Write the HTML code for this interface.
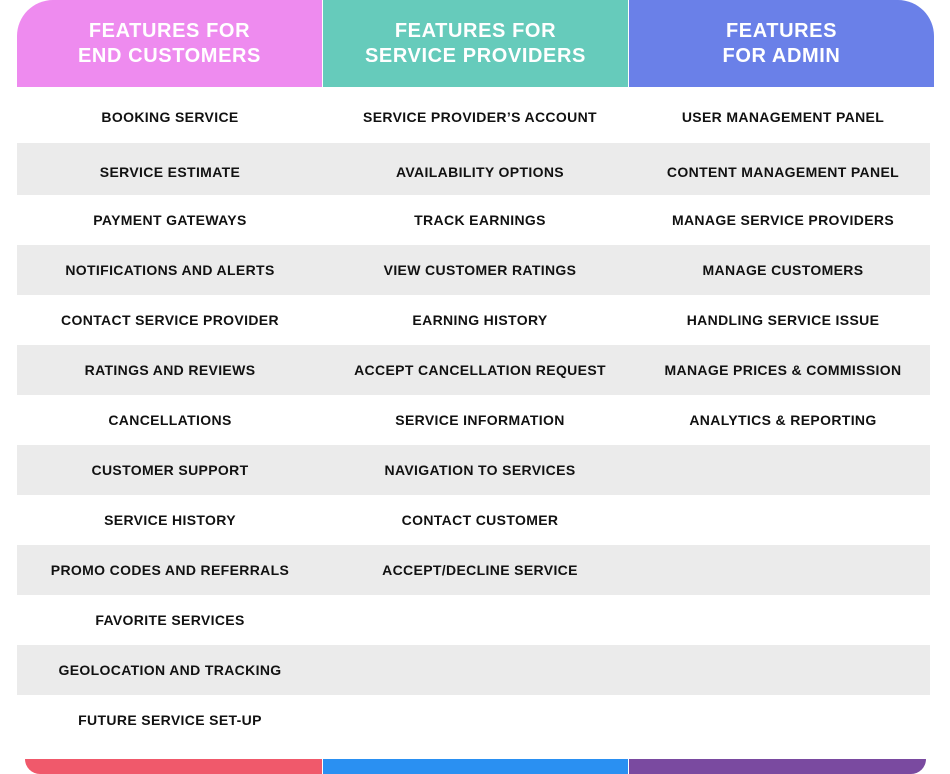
<!DOCTYPE html>
<html><head><style>
body{margin:0;width:950px;height:774px;background:#fff;position:relative;overflow:hidden;font-family:"Liberation Sans",Arial,sans-serif}
.h{position:absolute;top:0;height:87px;color:#fff;font-weight:bold;font-size:20px;letter-spacing:0.6px;text-align:center;line-height:25px;display:flex;align-items:center;justify-content:center}
.band{position:absolute;left:17px;width:913px;background:#ebebeb}
.t{position:absolute;width:306px;text-align:center;font-weight:bold;font-size:14px;letter-spacing:0.35px;color:#111;transform:translateY(-50%)}
.b{position:absolute;top:759px;height:15px}
</style></head><body>
<div class="h" style="left:17px;width:305px;background:#ee8bef;border-top-left-radius:36px">FEATURES FOR<br>END CUSTOMERS</div>
<div class="h" style="left:323px;width:305px;background:#66cbbb">FEATURES FOR<br>SERVICE PROVIDERS</div>
<div class="h" style="left:629px;width:305px;background:#6a80e8;border-top-right-radius:36px">FEATURES<br>FOR ADMIN</div>
<div class="band" style="top:143px;height:52px"></div>
<div class="band" style="top:245px;height:50px"></div>
<div class="band" style="top:345px;height:50px"></div>
<div class="band" style="top:445px;height:50px"></div>
<div class="band" style="top:545px;height:50px"></div>
<div class="band" style="top:645px;height:50px"></div>
<div class="b" style="left:25px;width:297px;background:#f0596b;border-bottom-left-radius:18px"></div>
<div class="b" style="left:323px;width:305px;background:#2a90f2"></div>
<div class="b" style="left:629px;width:297px;background:#7a4aa0;border-bottom-right-radius:18px"></div>
<div class="t" style="left:17px;top:117px">BOOKING SERVICE</div>
<div class="t" style="left:17px;top:172px">SERVICE ESTIMATE</div>
<div class="t" style="left:17px;top:220px">PAYMENT GATEWAYS</div>
<div class="t" style="left:17px;top:270px">NOTIFICATIONS AND ALERTS</div>
<div class="t" style="left:17px;top:320px">CONTACT SERVICE PROVIDER</div>
<div class="t" style="left:17px;top:370px">RATINGS AND REVIEWS</div>
<div class="t" style="left:17px;top:420px">CANCELLATIONS</div>
<div class="t" style="left:17px;top:470px">CUSTOMER SUPPORT</div>
<div class="t" style="left:17px;top:520px">SERVICE HISTORY</div>
<div class="t" style="left:17px;top:570px">PROMO CODES AND REFERRALS</div>
<div class="t" style="left:17px;top:620px">FAVORITE SERVICES</div>
<div class="t" style="left:17px;top:670px">GEOLOCATION AND TRACKING</div>
<div class="t" style="left:17px;top:720px">FUTURE SERVICE SET-UP</div>
<div class="t" style="left:327px;top:117px">SERVICE PROVIDER’S ACCOUNT</div>
<div class="t" style="left:327px;top:172px">AVAILABILITY OPTIONS</div>
<div class="t" style="left:327px;top:220px">TRACK EARNINGS</div>
<div class="t" style="left:327px;top:270px">VIEW CUSTOMER RATINGS</div>
<div class="t" style="left:327px;top:320px">EARNING HISTORY</div>
<div class="t" style="left:327px;top:370px">ACCEPT CANCELLATION REQUEST</div>
<div class="t" style="left:327px;top:420px">SERVICE INFORMATION</div>
<div class="t" style="left:327px;top:470px">NAVIGATION TO SERVICES</div>
<div class="t" style="left:327px;top:520px">CONTACT CUSTOMER</div>
<div class="t" style="left:327px;top:570px">ACCEPT/DECLINE SERVICE</div>
<div class="t" style="left:630px;top:117px">USER MANAGEMENT PANEL</div>
<div class="t" style="left:630px;top:172px">CONTENT MANAGEMENT PANEL</div>
<div class="t" style="left:630px;top:220px">MANAGE SERVICE PROVIDERS</div>
<div class="t" style="left:630px;top:270px">MANAGE CUSTOMERS</div>
<div class="t" style="left:630px;top:320px">HANDLING SERVICE ISSUE</div>
<div class="t" style="left:630px;top:370px">MANAGE PRICES &amp; COMMISSION</div>
<div class="t" style="left:630px;top:420px">ANALYTICS &amp; REPORTING</div>
</body></html>
